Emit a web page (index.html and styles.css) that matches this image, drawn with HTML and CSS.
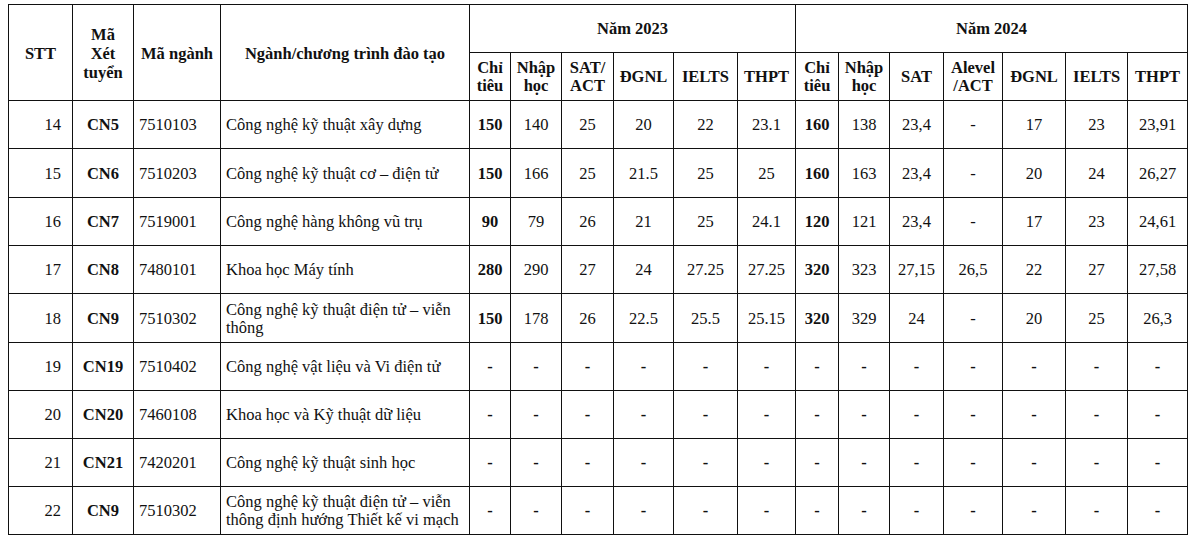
FILE: index.html
```html
<!DOCTYPE html>
<html lang="vi">
<head>
<meta charset="utf-8">
<title>Bảng điểm</title>
<link rel="stylesheet" href="styles.css">
</head>
<body>
<table class="grid">
  <colgroup>
    <col class="c64"><col class="c61"><col class="c87"><col class="c249">
    <col class="c41"><col class="c51"><col class="c52"><col class="c60"><col class="c64"><col class="c58">
    <col class="c43"><col class="c51"><col class="c54"><col class="c59"><col class="c63"><col class="c62"><col class="c60">
  </colgroup>
  <thead>
    <tr class="h1">
      <th rowspan="2">STT</th>
      <th rowspan="2">Mã<br>Xét<br>tuyển</th>
      <th rowspan="2">Mã ngành</th>
      <th rowspan="2">Ngành/chương trình đào tạo</th>
      <th colspan="6">Năm 2023</th>
      <th colspan="7">Năm 2024</th>
    </tr>
    <tr class="h2">
      <th>Chỉ<br>tiêu</th><th>Nhập<br>học</th><th>SAT/<br>ACT</th><th>ĐGNL</th><th>IELTS</th><th>THPT</th>
      <th>Chỉ<br>tiêu</th><th>Nhập<br>học</th><th>SAT</th><th>Alevel<br>/ACT</th><th>ĐGNL</th><th>IELTS</th><th>THPT</th>
    </tr>
  </thead>
  <tbody>
    <tr>
      <td class="stt">14</td><td class="b">CN5</td><td class="l">7510103</td><td class="l">Công nghệ kỹ thuật xây dựng</td>
      <td class="b">150</td><td>140</td><td>25</td><td>20</td><td>22</td><td>23.1</td>
      <td class="b">160</td><td>138</td><td>23,4</td><td>-</td><td>17</td><td>23</td><td>23,91</td>
    </tr>
    <tr class="t49">
      <td class="stt">15</td><td class="b">CN6</td><td class="l">7510203</td><td class="l">Công nghệ kỹ thuật cơ – điện tử</td>
      <td class="b">150</td><td>166</td><td>25</td><td>21.5</td><td>25</td><td>25</td>
      <td class="b">160</td><td>163</td><td>23,4</td><td>-</td><td>20</td><td>24</td><td>26,27</td>
    </tr>
    <tr>
      <td class="stt">16</td><td class="b">CN7</td><td class="l">7519001</td><td class="l">Công nghệ hàng không vũ trụ</td>
      <td class="b">90</td><td>79</td><td>26</td><td>21</td><td>25</td><td>24.1</td>
      <td class="b">120</td><td>121</td><td>23,4</td><td>-</td><td>17</td><td>23</td><td>24,61</td>
    </tr>
    <tr>
      <td class="stt">17</td><td class="b">CN8</td><td class="l">7480101</td><td class="l">Khoa học Máy tính</td>
      <td class="b">280</td><td>290</td><td>27</td><td>24</td><td>27.25</td><td>27.25</td>
      <td class="b">320</td><td>323</td><td>27,15</td><td>26,5</td><td>22</td><td>27</td><td>27,58</td>
    </tr>
    <tr class="t49">
      <td class="stt">18</td><td class="b">CN9</td><td class="l">7510302</td><td class="l">Công nghệ kỹ thuật điện tử – viễn thông</td>
      <td class="b">150</td><td>178</td><td>26</td><td>22.5</td><td>25.5</td><td>25.15</td>
      <td class="b">320</td><td>329</td><td>24</td><td>-</td><td>20</td><td>25</td><td>26,3</td>
    </tr>
    <tr class="empty">
      <td class="stt">19</td><td class="b">CN19</td><td class="l">7510402</td><td class="l">Công nghệ vật liệu và Vi điện tử</td>
      <td>-</td><td>-</td><td>-</td><td>-</td><td>-</td><td>-</td>
      <td>-</td><td>-</td><td>-</td><td>-</td><td>-</td><td>-</td><td>-</td>
    </tr>
    <tr class="empty">
      <td class="stt">20</td><td class="b">CN20</td><td class="l">7460108</td><td class="l">Khoa học và Kỹ thuật dữ liệu</td>
      <td>-</td><td>-</td><td>-</td><td>-</td><td>-</td><td>-</td>
      <td>-</td><td>-</td><td>-</td><td>-</td><td>-</td><td>-</td><td>-</td>
    </tr>
    <tr class="empty">
      <td class="stt">21</td><td class="b">CN21</td><td class="l">7420201</td><td class="l">Công nghệ kỹ thuật sinh học</td>
      <td>-</td><td>-</td><td>-</td><td>-</td><td>-</td><td>-</td>
      <td>-</td><td>-</td><td>-</td><td>-</td><td>-</td><td>-</td><td>-</td>
    </tr>
    <tr class="empty">
      <td class="stt">22</td><td class="b">CN9</td><td class="l">7510302</td><td class="l">Công nghệ kỹ thuật điện tử – viễn thông định hướng Thiết kế vi mạch</td>
      <td>-</td><td>-</td><td>-</td><td>-</td><td>-</td><td>-</td>
      <td>-</td><td>-</td><td>-</td><td>-</td><td>-</td><td>-</td><td>-</td>
    </tr>
  </tbody>
</table>
</body>
</html>
```

FILE: styles.css
```css
html, body {
  margin: 0;
  padding: 0;
  background: #ffffff;
}
body {
  padding: 4px 0 0 8px;
  font-family: "Liberation Serif", "Times New Roman", serif;
  color: #111111;
  font-size: 16.5px;
}
.grid {
  border-collapse: collapse;
  table-layout: fixed;
  width: 1179px;
}
.grid th, .grid td {
  border: 1px solid #111111;
  padding: 1px 3px 0 3px;
  text-align: center;
  vertical-align: middle;
  line-height: 18px;
  overflow: hidden;
}
.grid th {
  font-weight: bold;
  font-size: 16.5px;
}
.h1 th, .h2 th { height: 46px; }
.grid th[rowspan] { line-height: 19px; }
.grid tbody tr { height: 48px; }
.grid tbody tr.t49 { height: 49px; }
.grid td.l { text-align: left; padding-left: 5px; }
.grid td.stt { text-align: right; padding-right: 11px; }
.grid td.b { font-weight: bold; }
.grid tr.empty td { font-weight: bold; }
.grid tr.empty td.l, .grid tr.empty td.stt { font-weight: normal; }
.c64 { width: 64px; }
.c61 { width: 61px; }
.c87 { width: 87px; }
.c249 { width: 249px; }
.c41 { width: 41px; }
.c51 { width: 51px; }
.c52 { width: 52px; }
.c60 { width: 60px; }
.c58 { width: 58px; }
.c43 { width: 43px; }
.c54 { width: 54px; }
.c59 { width: 59px; }
.c63 { width: 63px; }
.c62 { width: 62px; }
```
